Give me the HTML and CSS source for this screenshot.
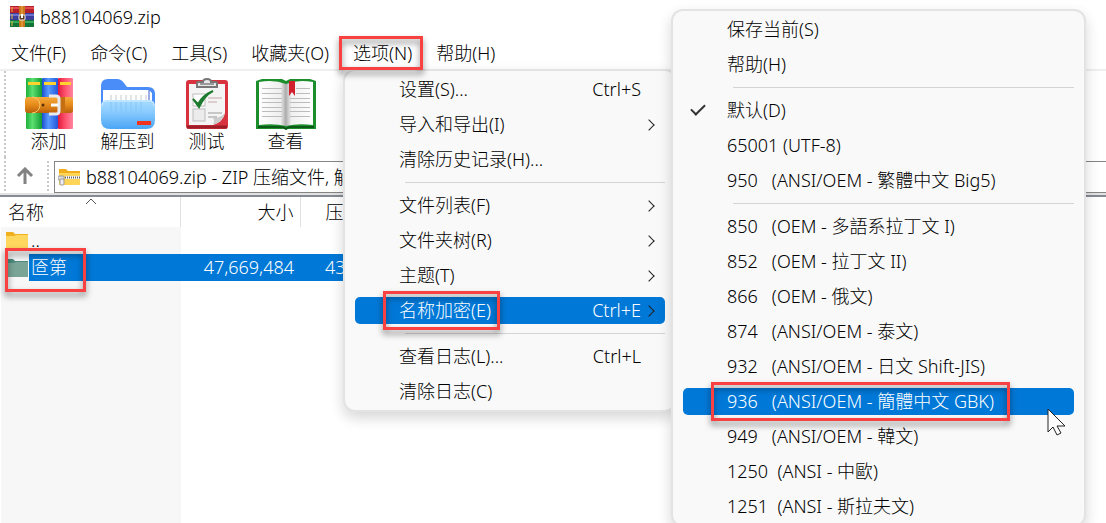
FILE: index.html
```html
<!DOCTYPE html>
<html lang="zh-CN">
<head>
    <meta charset="UTF-8">
    <meta name="viewport" content="width=device-width, initial-scale=1.0">
    <title>b88104069.zip</title>
    <link rel="stylesheet" href="styles.css">
</head>
<body>
    <div class="window">
        <header class="title-bar">
            <svg class="app-icon" viewBox="0 0 24 22" aria-hidden="true">
                <rect width="24" height="7" fill="#b5202c"/>
                <rect y="1" width="24" height="2" fill="#e04a50"/>
                <rect y="7" width="24" height="7" fill="#3a3f9c"/>
                <rect y="8" width="24" height="2" fill="#6a74d0"/>
                <rect y="14" width="24" height="7" fill="#13743a"/>
                <rect y="15" width="24" height="2" fill="#35a85a"/>
                <path d="M2 1v5M2 8v5M2 15v5" stroke="#e5b93c"/>
                <rect x="9" width="6" height="21" fill="#c9771c"/>
                <path d="M12 0v21" stroke="#f2b04a"/>
                <rect x="9" y="9" width="6" height="5" rx="1" fill="#5a3a1a" stroke="#eeeeee"/>
                <path d="M12 8v4" stroke="#ffffff" stroke-width="2"/>
            </svg>
            <span>b88104069.zip</span>
        </header>

        <nav class="menu-bar">
            <button>文件(F)</button>
            <button>命令(C)</button>
            <button>工具(S)</button>
            <button>收藏夹(O)</button>
            <button class="marked">选项(N)</button>
            <button>帮助(H)</button>
        </nav>

        <div class="toolbar">
            <button>
                <svg width="48" height="52" viewBox="0 0 48 52" aria-hidden="true">
                    <defs>
                        <linearGradient id="bookGreen"><stop offset="0" stop-color="#1fae3c"/><stop offset=".4" stop-color="#5be070"/><stop offset="1" stop-color="#129a33"/></linearGradient>
                        <linearGradient id="bookBlue"><stop offset="0" stop-color="#1c4fd0"/><stop offset=".4" stop-color="#5a9bff"/><stop offset="1" stop-color="#2256da"/></linearGradient>
                        <linearGradient id="bookRed"><stop offset="0" stop-color="#e01a3c"/><stop offset=".5" stop-color="#ff5470"/><stop offset="1" stop-color="#ff86a0"/></linearGradient>
                        <linearGradient id="belt" x2="0" y2="1"><stop offset="0" stop-color="#f5ab3c"/><stop offset=".5" stop-color="#e58a1a"/><stop offset="1" stop-color="#b9600c"/></linearGradient>
                    </defs>
                    <rect x="1" width="16" height="51" rx="1" fill="url(#bookGreen)"/>
                    <rect x="17" width="16" height="51" rx="1" fill="url(#bookBlue)"/>
                    <rect x="33" width="15" height="51" rx="1" fill="url(#bookRed)"/>
                    <path d="M3 5.500h12M19 5.500h12M35 5.500h11" stroke="#ffd22e" stroke-width="3"/>
                    <rect y="19" width="48" height="16" rx="3" fill="url(#belt)"/>
                    <path d="M7 19a8 8 0 0 1 0 16" fill="none" stroke="#ffc86a"/>
                    <rect x="35" y="19" width="5" height="16" fill="#c56f12"/>
                    <path d="M24 18h7q3 0 3 3v12q0 3-3 3h-7" fill="none" stroke="#e8eaf0" stroke-width="3"/>
                    <circle cx="18" cy="27" r="1.500" fill="#5a3208"/>
                    <path d="M26 27h7" stroke="#ffffff" stroke-width="3"/>
                </svg>
                <span>添加</span>
            </button>
            <button>
                <svg width="54" height="52" viewBox="0 0 54 52" aria-hidden="true">
                    <defs>
                        <linearGradient id="pocket" x2="0" y2="1"><stop offset="0" stop-color="#a9dcff"/><stop offset=".4" stop-color="#8accff"/><stop offset="1" stop-color="#4aa5f5"/></linearGradient>
                    </defs>
                    <path d="M0 8Q0 1 7 1h9q4 0 7 4l3 4h21q7 0 7 7v20H0z" fill="#4a8cf8"/>
                    <path d="M2 12h46l3 3v18H2z" fill="#ffffff"/>
                    <path d="M48 12v20" stroke="#3b5bd0"/>
                    <path d="M10 17v6M15 17v6M20 17v6M25 17v6M30 17v6M35 17v6M40 17v6M45 17v6" stroke="#c4c8d0"/>
                    <path d="M0 28q0-6 6-6h42q6 0 6 6v14q0 9-9 9H9q-9 0-9-9z" fill="url(#pocket)"/>
                    <path d="M10 24v13M15 24v13M20 24v13M25 24v13M30 24v13M35 24v13M40 24v13" stroke="#84c5f5"/>
                    <path d="M1 28q0-5 5-5h42q5 0 5 5" fill="none" stroke="#d5f0ff"/>
                    <rect x="36" y="43" width="14" height="4" fill="#f0321e"/>
                </svg>
                <span>解压到</span>
            </button>
            <button>
                <svg width="44" height="52" viewBox="0 0 44 52" aria-hidden="true">
                    <rect x="1" y="2" width="42" height="49" rx="3" fill="#d8323e"/>
                    <path d="M2 49h40" stroke="#9c1c28" stroke-width="3"/>
                    <path d="M4 6h36v29q-2 9-12 12H4z" fill="#f4f4f4"/>
                    <path d="M40 35q-2 9-12 12 2-5 0-7 8 0 12-5z" fill="#cccccc"/>
                    <rect x="8" y="16" width="12" height="12" fill="#ffffff" stroke="#bdbdbd"/>
                    <rect x="8" y="31" width="12" height="12" fill="#ececec" stroke="#bdbdbd"/>
                    <path d="M8 21l5 5C17 19 21 16 28 13 21 17 18 21 14 29z" fill="#1d7a2e" stroke="#1d7a2e" stroke-width="2"/>
                    <path d="M23 20h14M23 24h9" stroke="#c9a4a8"/>
                    <path d="M23 35h14M23 39h9" stroke="#999999"/>
                    <path d="M12 9V5q0-1 2-1h4q0-3 4-3t4 3h4q2 0 2 1v4z" fill="#e8e8e8" stroke="#777777" stroke-width="2"/>
                    <path d="M15 6h14" stroke="#999999" stroke-width="2"/>
                </svg>
                <span>测试</span>
            </button>
            <button>
                <svg width="60" height="52" viewBox="0 0 60 52" aria-hidden="true">
                    <defs>
                        <linearGradient id="pageLeft"><stop offset="0" stop-color="#ffffff"/><stop offset=".8" stop-color="#eeeeee"/><stop offset="1" stop-color="#a8a8a8"/></linearGradient>
                        <linearGradient id="pageRight"><stop offset="0" stop-color="#b0b0b0"/><stop offset=".2" stop-color="#f0f0f0"/><stop offset="1" stop-color="#ffffff"/></linearGradient>
                    </defs>
                    <path d="M0 3l6-2h20l4 2 4-2h20l6 2v48H0z" fill="#1c8f2c"/>
                    <path d="M2 49h25l3 2 3-2h25" fill="none" stroke="#0c5a18" stroke-width="2"/>
                    <path d="M3 4q15-3 27 2v42q-12-3-27-1z" fill="url(#pageLeft)"/>
                    <path d="M57 4q-15-3-27 2v42q12-3 27-1z" fill="url(#pageRight)"/>
                    <path d="M6 10.500h20M6 15.500h20M6 20.500h20M6 24.500h20M6 29.500h20M6 33.500h20M6 38.500h20M40 10.500h14M40 15.500h14M34 20.500h20M34 24.500h20M34 29.500h20M34 33.500h20M34 38.500h20" stroke="#bcbcbc"/>
                    <path d="M33 3h6v15l-3-4-3 4z" fill="#d21f2e"/>
                </svg>
                <span>查看</span>
            </button>
        </div>

        <div class="address-bar">
            <button class="up" aria-label="..">
                <svg width="18" height="18" viewBox="0 0 18 18" aria-hidden="true">
                    <path d="M9 17V3M2 9l7-7 7 7" fill="none" stroke="#828282" stroke-width="3"/>
                </svg>
            </button>
            <label class="address">
                <svg width="22" height="18" viewBox="0 0 22 18" aria-hidden="true">
                    <path d="M1 1h7l2 2h12v5H1z" fill="#f0ae1c"/>
                    <path d="M1 5h21v12H1z" fill="#ffd558"/>
                    <path d="M7 9.500h15" stroke="#f6f6f6" stroke-width="3"/>
                    <path d="M7 9.500h15" stroke="#666666" stroke-width="2" stroke-dasharray="1 1"/>
                    <rect x="0" y="8" width="6" height="4" rx="1" fill="#dddddd" stroke="#999999"/>
                    <rect x="2" y="11" width="4" height="6" rx="1" fill="#eeeeee" stroke="#999999"/>
                </svg>
                <input type="text" value="b88104069.zip - ZIP 压缩文件, 解" aria-label="b88104069.zip">
            </label>
        </div>

        <main class="file-list">
            <table>
                <thead>
                    <tr>
                        <th class="name">
                            名称
                            <svg class="sort" width="12" height="7" viewBox="0 0 12 7" aria-hidden="true">
                                <path d="M1 6l5-5 5 5" fill="none" stroke="#555555"/>
                            </svg>
                        </th>
                        <th class="size">大小</th>
                        <th class="packed">压</th>
                    </tr>
                </thead>
                <tbody>
                    <tr>
                        <td>
                            <div class="entry">
                                <svg width="22" height="18" viewBox="0 0 22 18" aria-hidden="true">
                                    <path d="M0 0h7l2 2h13v4H0z" fill="#f0b020"/>
                                    <path d="M0 4h8l2-1h12v15H0z" fill="#ffd75e"/>
                                </svg>
                                <span class="label">..</span>
                            </div>
                        </td>
                        <td></td>
                        <td></td>
                    </tr>
                    <tr class="selected">
                        <td>
                            <div class="entry marked">
                                <svg width="22" height="18" viewBox="0 0 22 18" aria-hidden="true">
                                    <path d="M0 0h7l2 2h13v4H0z" fill="#4f8c80"/>
                                    <path d="M0 4h8l2-1h12v15H0z" fill="#7aa596"/>
                                </svg>
                                <span class="label">匼第</span>
                            </div>
                        </td>
                        <td class="size">47,669,484</td>
                        <td class="packed">43</td>
                    </tr>
                </tbody>
            </table>
        </main>

        <div class="menu options-menu">
            <button><span>设置(S)...</span><kbd>Ctrl+S</kbd></button>
            <button class="parent"><span>导入和导出(I)</span></button>
            <button><span>清除历史记录(H)...</span></button>
            <hr>
            <button class="parent"><span>文件列表(F)</span></button>
            <button class="parent"><span>文件夹树(R)</span></button>
            <button class="parent"><span>主题(T)</span></button>
            <button class="parent active"><span class="marked">名称加密(E)</span><kbd>Ctrl+E</kbd></button>
            <hr>
            <button><span>查看日志(L)...</span><kbd>Ctrl+L</kbd></button>
            <button><span>清除日志(C)</span></button>
        </div>

        <div class="menu encoding-menu">
            <button><span>保存当前(S)</span></button>
            <button><span>帮助(H)</span></button>
            <hr>
            <button class="checked"><span>默认(D)</span></button>
            <button><span>65001 (UTF-8)</span></button>
            <button><span>950   (ANSI/OEM - 繁體中文 Big5)</span></button>
            <hr>
            <button><span>850   (OEM - 多語系拉丁文 I)</span></button>
            <button><span>852   (OEM - 拉丁文 II)</span></button>
            <button><span>866   (OEM - 俄文)</span></button>
            <button><span>874   (ANSI/OEM - 泰文)</span></button>
            <button><span>932   (ANSI/OEM - 日文 Shift-JIS)</span></button>
            <button class="active"><span class="marked">936   (ANSI/OEM - 簡體中文 GBK)</span></button>
            <button><span>949   (ANSI/OEM - 韓文)</span></button>
            <button><span>1250  (ANSI - 中歐)</span></button>
            <button><span>1251  (ANSI - 斯拉夫文)</span></button>
        </div>

        <svg class="cursor" width="20" height="28" viewBox="0 0 20 28" aria-hidden="true">
            <path d="M1 1v23l5-5 4 8 4-2-4-7h8z" fill="#ffffff" stroke="#222222"/>
        </svg>
    </div>
</body>
</html>
```
FILE: styles.css
```css
* {
    box-sizing: border-box;
}
body {
    margin: 0;
    font-family: "Noto Sans", "Noto Sans CJK SC", sans-serif;
    font-size: 18px;
    font-weight: 300;
    line-height: 27px;
    color: #000;
    background: #fff;
}
button, input {
    font: inherit;
    color: inherit;
    background: none;
    border: none;
    padding: 0;
    margin: 0;
}
svg {
    display: block;
    flex: none;
}
.window {
    position: relative;
    display: flex;
    flex-direction: column;
    height: 100vh;
    overflow: hidden;
}
.title-bar {
    display: flex;
    align-items: center;
    gap: 6px;
    height: 34px;
    padding-left: 10px;
}
.app-icon {
    width: 24px;
    height: 22px;
}
.menu-bar {
    display: flex;
    align-items: center;
    gap: 24px;
    height: 37px;
    padding: 4px 0 0 11px;
    border-bottom: 2px solid #efefef;
}

/* red frame round the steps to follow */
.marked {
    position: relative;
}
.marked::after {
    content: "";
    position: absolute;
    inset: -6px -9px -6px -16px;
    border: 3px solid #f94141;
    filter: drop-shadow(0 4px 3px rgba(0, 0, 0, 0.5));
    pointer-events: none;
    z-index: 3;
}
.menu-bar .marked::after {
    inset: -4px -11px -3px -14px;
}
.encoding-menu .marked::after {
    right: -16px;
}
.entry.marked::after {
    inset: -6px 94px -11px 5px;
}

.toolbar {
    display: flex;
    height: 86px;
    padding: 7px 0 0 3px;
    margin-left: 4px;
    border-left: 2px dotted #c8c8c8;
}
.toolbar button {
    display: flex;
    flex-direction: column;
    align-items: center;
    width: 79px;
}
.toolbar svg {
    margin-bottom: -2px;
}
.address-bar {
    display: flex;
    height: 38px;
    padding-top: 4px;
    margin-left: 4px;
    border-left: 2px dotted #c8c8c8;
}
.up {
    display: flex;
    align-items: center;
    justify-content: center;
    width: 43px;
    padding: 0 4px 4px 0;
    border-right: 2px dotted #c8c8c8;
}
.address {
    display: flex;
    flex: 1;
    align-items: center;
    gap: 6px;
    height: 32px;
    margin-left: 5px;
    padding-left: 3px;
    border: 1px solid #858585;
    border-right: none;
}
.address input {
    flex: 1;
    min-width: 0;
    outline: none;
}

.file-list {
    flex: 1;
    border-top: 2px solid #868a92;
    box-shadow: 0 -2px 0 #e2e2e2;
    background: linear-gradient(#f7f7f7, #f7f7f7) 1px 0 / 180px 100% no-repeat;
}
table {
    border-collapse: collapse;
    table-layout: fixed;
    width: 420px;
}
th {
    position: relative;
    height: 30px;
    padding: 0;
    font-weight: inherit;
    text-align: left;
    background: #fff;
    border-right: 1px solid #e2e2e2;
}
th.name {
    width: 180px;
    padding-left: 8px;
}
th.size {
    width: 120px;
}
.size {
    text-align: right;
    padding-right: 6px;
}
th.packed, td.packed {
    padding-left: 25px;
}
.sort {
    position: absolute;
    top: 1px;
    left: 85px;
}
td {
    height: 27px;
    padding: 0;
}
.entry {
    display: flex;
    align-items: center;
    padding-left: 6px;
}
.entry .label {
    flex: 1;
    margin-left: 1px;
    padding-left: 2px;
}
.selected td + td, .selected .label {
    color: #fff;
    background: #0078d7;
}

.menu {
    position: absolute;
    display: flex;
    flex-direction: column;
    gap: 8px;
    padding: 5px 10px;
    background: #f9f9f9;
    border: 2px solid #e3e3e3;
    border-radius: 12px;
    box-shadow: 0 6px 14px rgba(0, 0, 0, 0.16);
}
.options-menu {
    top: 69px;
    left: 343px;
    width: 334px;
}
.encoding-menu {
    top: 9px;
    left: 671px;
    width: 415px;
}
.menu button {
    display: flex;
    align-items: center;
    justify-content: space-between;
    height: 27px;
    padding: 0 24px 0 44px;
    border-radius: 5px;
    white-space: pre;
}
.menu button.active {
    color: #fff;
    background: #0078d7;
}
.menu kbd {
    font: inherit;
}
.menu hr {
    width: calc(100% - 50px);
    height: 1px;
    margin: 1px 0 1px 50px;
    border: none;
    background: #d4d4d4;
}
.parent, .checked {
    position: relative;
}
.parent::before {
    content: "";
    position: absolute;
    top: 10px;
    right: 12px;
    width: 7px;
    height: 7px;
    border: solid #222;
    border-width: 1px 1px 0 0;
    transform: rotate(45deg);
}
.checked::before {
    content: "";
    position: absolute;
    top: 7px;
    left: 8px;
    width: 12px;
    height: 6px;
    border: solid #333;
    border-width: 0 0 2px 2px;
    transform: rotate(-45deg);
}
.cursor {
    position: absolute;
    top: 408px;
    left: 1047px;
}
```
